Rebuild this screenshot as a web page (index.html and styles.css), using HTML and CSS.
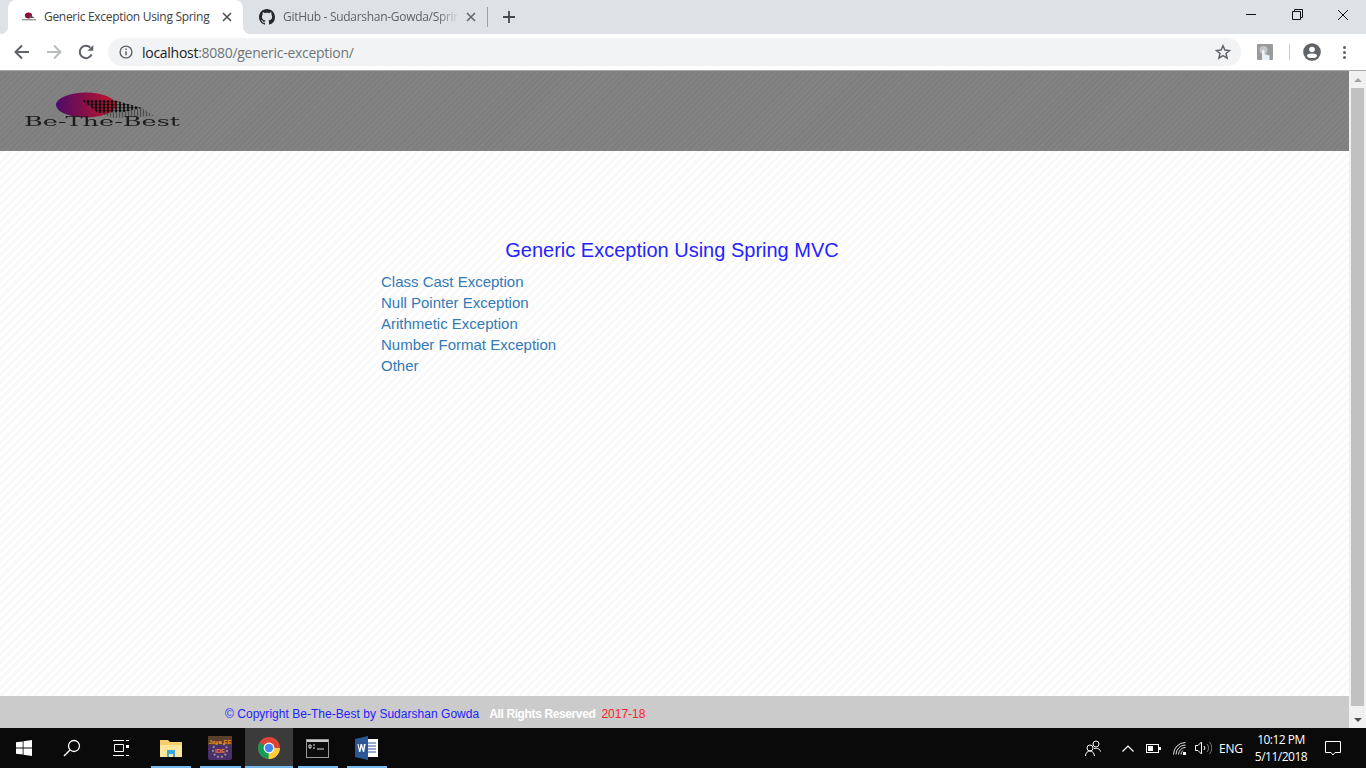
FILE: index.html
```html
<!DOCTYPE html>
<html lang="en">

<head>
    <meta charset="UTF-8">
    <title>Generic Exception Using Spring</title>
    <link rel="stylesheet" href="styles.css">
</head>

<body>
    <div class="tabstrip">
        <div class="tab active">
            <svg class="favicon" width="16" height="16" viewBox="0 0 16 16">
                <ellipse cx="7.5" cy="6.5" rx="3.6" ry="3" fill="#8a1033" />
                <path d="M9 6l5 3H8z" fill="#555" />
                <rect x="1" y="10" width="14" height="1.4" fill="#999" />
            </svg>
            <span class="tab-title">Generic Exception Using Spring</span>
            <svg class="tab-close" width="10" height="10" viewBox="0 0 10 10">
                <path d="M1 1l8 8M9 1l-8 8" stroke="#45484c" stroke-width="1.5" fill="none" />
            </svg>
        </div>
        <div class="tab second">
            <svg class="favicon" width="16" height="16" viewBox="0 0 16 16">
                <path fill="#24292e" fill-rule="evenodd"
                    d="M8 0C3.58 0 0 3.58 0 8c0 3.54 2.29 6.53 5.47 7.59.4.07.55-.17.55-.38 0-.19-.01-.82-.01-1.49-2.01.37-2.53-.49-2.69-.94-.09-.23-.48-.94-.82-1.13-.28-.15-.68-.52-.01-.53.63-.01 1.08.58 1.23.82.72 1.21 1.87.87 2.33.66.07-.52.28-.87.51-1.07-1.78-.2-3.64-.89-3.64-3.95 0-.87.31-1.59.82-2.15-.08-.2-.36-1.02.08-2.12 0 0 .67-.21 2.2.82.64-.18 1.32-.27 2-.27.68 0 1.36.09 2 .27 1.53-1.04 2.2-.82 2.2-.82.44 1.1.16 1.92.08 2.12.51.56.82 1.27.82 2.15 0 3.07-1.87 3.75-3.65 3.95.29.25.54.73.54 1.48 0 1.07-.01 1.93-.01 2.2 0 .21.15.46.55.38A8.013 8.013 0 0 0 16 8c0-4.42-3.58-8-8-8z" />
            </svg>
            <span class="tab-title fade">GitHub - Sudarshan-Gowda/Sprin</span>
            <svg class="tab-close" width="10" height="10" viewBox="0 0 10 10">
                <path d="M1 1l8 8M9 1l-8 8" stroke="#5f6368" stroke-width="1.5" fill="none" />
            </svg>
        </div>
        <div class="tab-sep"></div>
        <svg class="new-tab" width="12" height="12" viewBox="0 0 12 12">
            <path d="M6 0v12M0 6h12" stroke="#45484c" stroke-width="1.8" fill="none" />
        </svg>
        <div class="win-controls">
            <div class="win-btn">
                <svg width="11" height="11" viewBox="0 0 11 11"><path d="M0 5.5h10" stroke="#111" fill="none" /></svg>
            </div>
            <div class="win-btn">
                <svg width="11" height="11" viewBox="0 0 11 11">
                    <path d="M.5 2.5h8v8h-8zM2.5 2.5v-2h8v8h-2" stroke="#111" fill="none" />
                </svg>
            </div>
            <div class="win-btn">
                <svg width="12" height="12" viewBox="0 0 12 12"><path d="M1 1l10 10M11 1L1 11" stroke="#111" fill="none" /></svg>
            </div>
        </div>
    </div>

    <div class="toolbar">
        <svg class="nav-icon" width="16" height="16" viewBox="0 0 16 16">
            <path d="M15 8H2M8 1.500L1.500 8 8 14.500" stroke="#5f6368" stroke-width="2" fill="none" />
        </svg>
        <svg class="nav-icon" width="16" height="16" viewBox="0 0 16 16">
            <path d="M1 8h13M8 1.500L14.500 8 8 14.500" stroke="#b9bcc0" stroke-width="2" fill="none" />
        </svg>
        <svg class="nav-icon" width="16" height="16" viewBox="0 0 16 16">
            <path d="M13.600 10.500A6.200 6.200 0 1 1 12.400 3.600" stroke="#5f6368" stroke-width="2" fill="none" />
            <path d="M9.500 6.800h5.800V1z" fill="#5f6368" />
        </svg>
        <div class="omnibox">
            <svg class="info-icon" width="14" height="14" viewBox="0 0 14 14">
                <circle cx="7" cy="7" r="5.900" stroke="#5f6368" stroke-width="1.400" fill="none" />
                <path d="M7 6.200v4M7 3.600v1.500" stroke="#5f6368" stroke-width="1.500" fill="none" />
            </svg>
            <span class="url"><span class="host">localhost</span>:8080/generic-exception/</span>
            <svg class="star" width="16" height="16" viewBox="0 0 16 16">
                <path d="M8 1.800l1.900 4.300 4.600.4-3.500 3 1.100 4.600L8 11.700l-4.100 2.400L5 9.500l-3.500-3 4.600-.4z"
                    stroke="#5f6368" stroke-width="1.500" fill="none" />
            </svg>
        </div>
        <svg class="ext-icon" width="16" height="16" viewBox="0 0 16 16">
            <rect width="16" height="16" rx="1" fill="#9a9a9a" />
            <circle cx="6.500" cy="6" r="4" fill="#c4c4c4" />
            <path d="M5 16V6h2.500v4l5 1.500V16z" fill="#e8f1f8" />
        </svg>
        <div class="tool-sep"></div>
        <svg class="avatar" width="18" height="18" viewBox="0 0 18 18">
            <circle cx="9" cy="9" r="8.800" fill="#5f6368" />
            <circle cx="9" cy="6.500" r="2.800" fill="#fff" />
            <ellipse cx="9" cy="12.700" rx="5" ry="2.300" fill="#fff" />
        </svg>
        <div class="menu-dots"><i></i><i></i><i></i></div>
    </div>

    <div class="viewport">
        <div class="page">
            <header class="site-header">
                <svg class="logo" width="160" height="40" viewBox="0 0 160 40">
                    <defs>
                        <linearGradient id="ball" x1="0" x2="1" y1="0" y2="0">
                            <stop offset="0" stop-color="#4a0c6a" />
                            <stop offset="0.5" stop-color="#8a1045" />
                            <stop offset="1" stop-color="#c8142c" />
                        </linearGradient>
                        <pattern id="dots" width="4" height="3" patternUnits="userSpaceOnUse">
                            <circle cx="2" cy="1.500" r="1.500" fill="#0c0c0c" />
                        </pattern>
                        <pattern id="dots-light" width="3" height="2" patternUnits="userSpaceOnUse">
                            <circle cx="1.500" cy="1" r="0.800" fill="#333" />
                        </pattern>
                    </defs>
                    <ellipse cx="64" cy="14" rx="30" ry="12.500" fill="url(#ball)" />
                    <path d="M60 9 L92 9 L120 17 L102 21 L76 22 Z" fill="url(#dots)" />
                    <path d="M76 22 L102 21 L120 17 L132 25 L92 27 Z" fill="url(#dots-light)" />
                    <text class="logo-text" x="2" y="35" textLength="156" lengthAdjust="spacingAndGlyphs">Be-The-Best</text>
                </svg>
            </header>
            <main class="content">
                <h1 class="title">Generic Exception Using Spring MVC</h1>
                <ul class="links">
                    <li><a href="#">Class Cast Exception</a></li>
                    <li><a href="#">Null Pointer Exception</a></li>
                    <li><a href="#">Arithmetic Exception</a></li>
                    <li><a href="#">Number Format Exception</a></li>
                    <li><a href="#">Other</a></li>
                </ul>
            </main>
            <footer class="site-footer">
                <span class="copy">© Copyright Be-The-Best by Sudarshan Gowda</span>
                <span class="rights">All Rights Reserved</span>
                <span class="years">2017-18</span>
            </footer>
        </div>
        <div class="scrollbar">
            <div class="arrow up"></div>
            <div class="track"><div class="thumb"></div></div>
            <div class="arrow down"></div>
        </div>
    </div>

    <div class="taskbar">
        <div class="task-slot narrow">
            <svg width="16" height="16" viewBox="0 0 16 16">
                <path d="M0 2.300l6.700-.9v6.200H0zM7.500 1.300L16 0v7.600H7.500zM0 8.400h6.700v6.200L0 13.700zM7.500 8.400H16V16l-8.500-1.200z" fill="#fff" />
            </svg>
        </div>
        <div class="task-slot narrow">
            <svg width="18" height="18" viewBox="0 0 18 18">
                <circle cx="11" cy="7" r="5.500" stroke="#fff" stroke-width="1.300" fill="none" />
                <path d="M7 11l-6 6" stroke="#fff" stroke-width="1.500" fill="none" />
            </svg>
        </div>
        <div class="task-slot wide">
            <svg width="16" height="16" viewBox="0 0 16 16">
                <path d="M0 .5h11M0 15.500h11M1.500 4.500h9v7h-9zM13 .5h3M13 15.500h3" stroke="#fff" fill="none" />
                <rect x="13" y="5" width="3" height="3" fill="#fff" />
            </svg>
        </div>
        <div class="task-slot app">
            <svg width="22" height="18" viewBox="0 0 22 18">
                <path d="M0 1h8l2 2h12v15H0z" fill="#f6cf6a" />
                <path d="M0 6h22v12H0z" fill="#fde69a" />
                <path d="M7 11h8v7h-2v-3H9v3H7z" fill="#38a4e0" />
            </svg>
        </div>
        <div class="task-slot app spaced">
            <svg width="24" height="24" viewBox="0 0 24 24">
                <rect width="24" height="24" rx="2" fill="#4b2f6b" />
                <rect y="0" width="24" height="9" fill="#5a3f2c" />
                <circle cx="12" cy="14" r="7" stroke="#8f8f8f" stroke-width="2" stroke-dasharray="2 2" fill="none" />
                <text class="eclipse-text" x="12" y="8" text-anchor="middle">Java EE</text>
                <text class="eclipse-text" x="12" y="17" text-anchor="middle">IDE</text>
            </svg>
        </div>
        <div class="task-slot app active">
            <svg width="24" height="24" viewBox="0 0 24 24">
                <circle cx="12" cy="12" r="11" fill="#db4437" />
                <path d="M12 12L2.500 6.500A11 11 0 0 0 12 23z" fill="#0f9d58" />
                <path d="M12 12h10.900A11 11 0 0 1 12 23l-.5-.1z" fill="#ffcd40" />
                <circle cx="12" cy="12" r="5.400" fill="#fff" />
                <circle cx="12" cy="12" r="4.200" fill="#4285f4" />
            </svg>
        </div>
        <div class="task-slot app">
            <svg width="23" height="19" viewBox="0 0 23 19">
                <rect x=".5" y=".5" width="22" height="18" fill="#0c0c0c" stroke="#9a9a9a" />
                <rect x="1" y="1" width="21" height="2" fill="#ccc" />
                <path d="M3 6h2v3H3zM7 6h2M7 9h2M11 10h7" stroke="#ddd" fill="none" />
            </svg>
        </div>
        <div class="task-slot app">
            <svg width="24" height="24" viewBox="0 0 24 24">
                <rect x="9" y="3" width="14" height="18" fill="#fff" />
                <path d="M12 7h9M12 10h9M12 13h9M12 16h9" stroke="#2b5797" fill="none" />
                <path d="M0 3l13-3v24L0 21z" fill="#2b5797" />
                <path d="M2.500 8l1.600 8h1.200l1.300-5 1.300 5h1.200l1.600-8H9l-.8 5-1.200-5H5.600l-1.200 5-.8-5z" fill="#fff" />
            </svg>
        </div>
        <div class="tray">
            <svg class="tray-people" width="16" height="17" viewBox="0 0 16 17">
                <circle cx="11" cy="4" r="3" stroke="#fff" fill="none" />
                <circle cx="5" cy="8" r="3" stroke="#fff" fill="none" />
                <path d="M.5 16c0-3 2-5 4.500-5s4 2 4.500 5M9 8.500c3-.5 6 0 6.500 3" stroke="#fff" fill="none" />
            </svg>
            <svg class="tray-chevron" width="12" height="7" viewBox="0 0 12 7">
                <path d="M.5 6.500L6 1l5.500 5.500" stroke="#fff" stroke-width="1.200" fill="none" />
            </svg>
            <svg class="tray-battery" width="15" height="9" viewBox="0 0 15 9">
                <rect x=".5" y=".5" width="12" height="8" stroke="#fff" fill="none" />
                <rect x="2" y="2" width="5" height="5" fill="#fff" />
                <rect x="13" y="3" width="2" height="3" fill="#fff" />
            </svg>
            <svg class="tray-wifi" width="13" height="13" viewBox="0 0 13 13">
                <path d="M.5 12.500a12 12 0 0 1 12-12M3 12.500a9.500 9.500 0 0 1 9.500-9.500M5.500 12.500a7 7 0 0 1 7-7M8 12.500A4.500 4.500 0 0 1 10 8.500" stroke="#ddd" fill="none" />
                <rect x="10" y="10" width="3" height="3" fill="#fff" />
            </svg>
            <svg class="tray-sound" width="17" height="14" viewBox="0 0 17 14">
                <path d="M.5 4.500h2.500l3.500-3.500v12L3 9.500H.5z" stroke="#fff" fill="none" />
                <path d="M9 5a3 3 0 0 1 0 4" stroke="#fff" fill="none" />
                <path d="M12 3a6 6 0 0 1 0 8M14.500 1a9 9 0 0 1 0 12" stroke="#777" fill="none" />
            </svg>
            <span class="tray-lang">ENG</span>
            <div class="tray-clock">
                <span>10:12 PM</span>
                <span>5/11/2018</span>
            </div>
            <svg class="tray-note" width="16" height="15" viewBox="0 0 16 15">
                <path d="M.5 .5h15v11H10l-2 2.500-2-2.500H.5z" stroke="#fff" fill="none" />
            </svg>
        </div>
    </div>
</body>

</html>
```

FILE: styles.css
```css
* {
    box-sizing: border-box;
}

html,
body {
    height: 100%;
}

body {
    margin: 0;
    height: 100vh;
    display: flex;
    flex-direction: column;
    overflow: hidden;
    font-family: "Liberation Sans", Arial, sans-serif;
}

svg {
    display: block;
    flex: none;
}

/* browser chrome */
.tabstrip {
    height: 34px;
    flex: none;
    background-color: #dee1e6;
    display: flex;
    align-items: center;
    padding-left: 8px;
    font-family: "Open Sans", sans-serif;
    font-size: 12px;
}

.tab {
    height: 34px;
    display: flex;
    align-items: center;
    position: relative;
}

.tab.active {
    width: 235px;
    background-color: #fff;
    border-radius: 8px 8px 0 0;
    padding-left: 13px;
    color: #3c4043;
}

.tab.active::before,
.tab.active::after {
    content: "";
    position: absolute;
    bottom: 0;
    width: 8px;
    height: 8px;
}

.tab.active::before {
    left: -8px;
    background: radial-gradient(circle at 0 0, #dee1e6 8px, #fff 8.5px);
}

.tab.active::after {
    right: -8px;
    background: radial-gradient(circle at 100% 0, #dee1e6 8px, #fff 8.5px);
}

.tab.active .tab-title {
    width: 171px;
    margin-left: 7px;
}

.tab.active .tab-close {
    margin-left: 7px;
}

.tab.second {
    width: 244px;
    padding-left: 16px;
    color: #5f6368;
}

.second .tab-title {
    width: 176px;
    margin-left: 8px;
}

.tab-title {
    white-space: nowrap;
    letter-spacing: -0.3px;
    line-height: 16px;
    margin-top: -1px;
}

.tab-title.fade {
    -webkit-mask-image: linear-gradient(to right, #000 88%, transparent);
    mask-image: linear-gradient(to right, #000 88%, transparent);
}

.second .tab-close {
    margin-left: 7px;
}

.tab-sep {
    width: 1px;
    height: 20px;
    background-color: #9aa0a6;
}

.new-tab {
    margin-left: 15px;
}

.win-controls {
    margin-left: auto;
    display: flex;
    align-items: center;
    margin-top: -5px;
}

.win-btn {
    width: 46px;
    height: 29px;
    display: flex;
    justify-content: center;
    align-items: center;
}

.toolbar {
    height: 36px;
    flex: none;
    background-color: #fff;
    display: flex;
    align-items: center;
    padding-left: 14px;
}

.nav-icon {
    margin-right: 16px;
}

.omnibox {
    width: 1133px;
    height: 28px;
    margin-left: -2px;
    background-color: #f1f3f4;
    border-radius: 14px;
    display: flex;
    align-items: center;
    padding-left: 11px;
    padding-right: 10px;
}

.url {
    margin-left: 9px;
    font-family: "Open Sans", sans-serif;
    font-size: 14px;
    letter-spacing: -0.28px;
    color: #70757a;
}

.host {
    color: #202124;
}

.star {
    margin-left: auto;
}

.ext-icon {
    margin-left: 16px;
}

.tool-sep {
    width: 1px;
    height: 16px;
    background-color: #c8cacc;
    margin-left: 16px;
}

.avatar {
    margin-left: 13px;
}

.menu-dots {
    margin-left: 22px;
    display: flex;
    flex-direction: column;
    gap: 2px;
}

.menu-dots i {
    display: block;
    width: 3px;
    height: 3px;
    border-radius: 50%;
    background-color: #5f6368;
}

/* page */
.viewport {
    flex: 1;
    min-height: 0;
    display: flex;
    border-top: 1px solid #a8a8a8;
}

.page {
    flex: 1;
    display: flex;
    flex-direction: column;
    background: repeating-linear-gradient(135deg, #fff 0, #fff 3px, #f9f9f9 3px, #f9f9f9 6px);
}

.site-header {
    height: 80px;
    flex: none;
    background: repeating-linear-gradient(135deg, #838383 0, #838383 2px, #7e7e7e 2px, #7e7e7e 4px);
    padding: 20px 0 0 22px;
}

.logo {
    filter: blur(0.5px);
}

.logo-text {
    font-family: "DejaVu Serif", serif;
    font-size: 12px;
    fill: #1c1c1c;
}

.content {
    flex: 1;
    padding: 87px 0 0 381px;
}

.title {
    width: 582px;
    margin: 0 0 9px;
    font-size: 20px;
    font-weight: normal;
    line-height: 24px;
    text-align: center;
    color: #2424ff;
}

.links {
    list-style: none;
    margin: 0;
    padding: 0;
    font-size: 15px;
    line-height: 21px;
}

.links a {
    color: #337ab7;
    text-decoration: none;
}

.site-footer {
    height: 32px;
    flex: none;
    background-color: #cbcbcb;
    padding: 10px 0 0 225px;
    font-size: 12px;
    line-height: 16px;
    display: flex;
}

.copy {
    color: #2222ff;
    letter-spacing: 0.03px;
}

.rights {
    margin-left: 10px;
    color: #fff;
    font-weight: bold;
    letter-spacing: -0.38px;
}

.years {
    margin-left: 6px;
    color: #ff2222;
}

.scrollbar {
    width: 17px;
    flex: none;
    background-color: #f1f1f1;
    display: flex;
    flex-direction: column;
}

.arrow {
    height: 17px;
    flex: none;
    display: flex;
    justify-content: center;
    align-items: center;
}

.arrow::before {
    content: "";
    border-left: 4px solid transparent;
    border-right: 4px solid transparent;
}

.arrow.up::before {
    border-bottom: 4px solid #a3a3a3;
}

.arrow.down::before {
    border-top: 4px solid #505050;
}

.track {
    flex: 1;
    padding: 0 2px 0 2px;
}

.thumb {
    height: 618px;
    background-color: #c1c1c1;
}

/* windows taskbar */
.taskbar {
    height: 40px;
    flex: none;
    background-color: #0a0a0a;
    display: flex;
}

.task-slot {
    width: 49px;
    display: flex;
    justify-content: center;
    align-items: center;
    position: relative;
}

.task-slot.narrow {
    width: 48px;
}

.task-slot.wide {
    width: 50px;
}

.task-slot.spaced {
    width: 50px;
}

.task-slot.app::after {
    content: "";
    position: absolute;
    bottom: 0;
    left: 5px;
    right: 4px;
    height: 2px;
    background-color: #76b9ed;
}

.task-slot.active {
    width: 48px;
    background-color: #3b3b3b;
}

.task-slot.active::after {
    left: 0;
    right: 0;
}

.eclipse-text {
    font-family: "Liberation Sans", sans-serif;
    font-size: 6px;
    font-weight: bold;
    fill: #f08a1d;
}

.tray {
    flex: 1;
    display: flex;
    align-items: center;
    padding-left: 694px;
    color: #fff;
    font-family: "Open Sans", sans-serif;
    font-size: 12px;
}

.tray-chevron {
    margin-left: 21px;
}

.tray-battery {
    margin-left: 12px;
}

.tray-wifi {
    margin-left: 12px;
}

.tray-sound {
    margin-left: 9px;
}

.tray-lang {
    margin-left: 7px;
    width: 26px;
    letter-spacing: -0.2px;
}

.tray-clock {
    width: 66px;
    margin-left: 3px;
    display: flex;
    flex-direction: column;
    align-items: center;
    line-height: 17px;
    letter-spacing: -0.5px;
}

.tray-note {
    margin-left: 11px;
}
```
